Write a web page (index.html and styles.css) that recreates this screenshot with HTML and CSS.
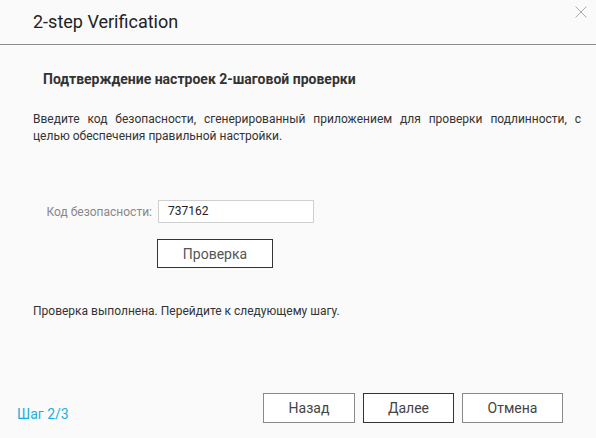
FILE: index.html
```html
<!DOCTYPE html>
<html lang="ru">
<head>
<meta charset="utf-8">
<link rel="stylesheet" href="styles.css">
</head>
<body>
<div class="dialog">
  <header class="header">
    <h1 class="title">2-step Verification</h1>
    <button class="close" aria-label="Close">
      <svg width="12" height="12" viewBox="0 0 12 12"><path d="M0.5 0.5L11.5 11.5M11.5 0.5L0.5 11.5" stroke="#a9a9a9" stroke-width="1" fill="none"/></svg>
    </button>
  </header>
  <main class="content">
    <h2 class="heading">Подтверждение настроек 2-шаговой проверки</h2>
    <p class="desc">Введите код безопасности, сгенерированный приложением для проверки подлинности, с целью обеспечения правильной настройки.</p>
    <div class="form">
      <div class="row">
        <label class="label">Код безопасности:</label>
        <div class="input">737162</div>
      </div>
      <div class="row">
        <span class="label"></span>
        <button class="btn verify">Проверка</button>
      </div>
    </div>
    <p class="status">Проверка выполнена. Перейдите к следующему шагу.</p>
  </main>
  <footer class="footer">
    <span class="step">Шаг 2/3</span>
    <div class="actions">
      <button class="btn back">Назад</button>
      <button class="btn next">Далее</button>
      <button class="btn cancel">Отмена</button>
    </div>
  </footer>
</div>
</body>
</html>
```
FILE: styles.css
```css
* { box-sizing: border-box; }
html, body { margin: 0; padding: 0; }
body {
  background: #fafafa;
  font-family: Roboto, "Noto Sans", sans-serif;
  color: #333;
}
.dialog {
  height: 438px;
  display: flex;
  flex-direction: column;
}
.header {
  position: relative;
  height: 45px;
  border-bottom: 1px solid #8c8c8c;
  display: flex;
  align-items: center;
  padding-left: 33px;
}
.title {
  margin: 0;
  font-size: 18px;
  font-weight: 400;
  color: #222;
  line-height: 20px;
  padding-bottom: 1px;
}
.close {
  position: absolute;
  top: 6px;
  right: 9px;
  border: 0;
  background: none;
  padding: 0;
  width: 12px;
  height: 12px;
  display: block;
}
.close svg { display: block; }
.content {
  padding: 0 15px 0 33px;
}
.heading {
  margin: 26px 0 0 10px;
  font-size: 14px;
  font-weight: 700;
  line-height: 16px;
  color: #333;
}
.desc {
  margin: 24px 0 0;
  font-size: 12px;
  line-height: 17px;
  color: #333;
  text-align: justify;
}
.form {
  margin-top: 55px;
  display: flex;
  flex-direction: column;
  gap: 16px;
}
.row {
  display: flex;
  align-items: center;
}
.label {
  width: 125px;
  text-align: right;
  padding-right: 6px;
  font-size: 12px;
  color: #888;
}
.input {
  width: 156px;
  height: 23px;
  border: 1px solid #cfcfcf;
  background: #fff;
  font-size: 12px;
  line-height: 21px;
  padding-left: 9px;
  color: #222;
}
.btn {
  font-family: Roboto, "Noto Sans", sans-serif;
  font-size: 14px;
  color: #444;
  background: #fff;
  border: 1px solid #8a8a8a;
  padding: 0;
  height: 30px;
}
.verify {
  width: 116px;
  height: 29px;
  margin-left: -1px;
  border-color: #333;
  color: #555;
}
.status {
  margin: 35px 0 0;
  font-size: 12px;
  line-height: 17px;
  color: #333;
}
.footer {
  margin-top: auto;
  display: flex;
  align-items: flex-end;
  justify-content: space-between;
  padding: 0 33px 15px 17px;
}
.step {
  font-size: 14px;
  color: #1aaee0;
  line-height: 16px;
  padding-bottom: 1px;
}
.actions {
  display: flex;
  gap: 8px;
}
.back { width: 92px; }
.next { width: 91px; border-color: #333; }
.cancel { width: 101px; }
```
